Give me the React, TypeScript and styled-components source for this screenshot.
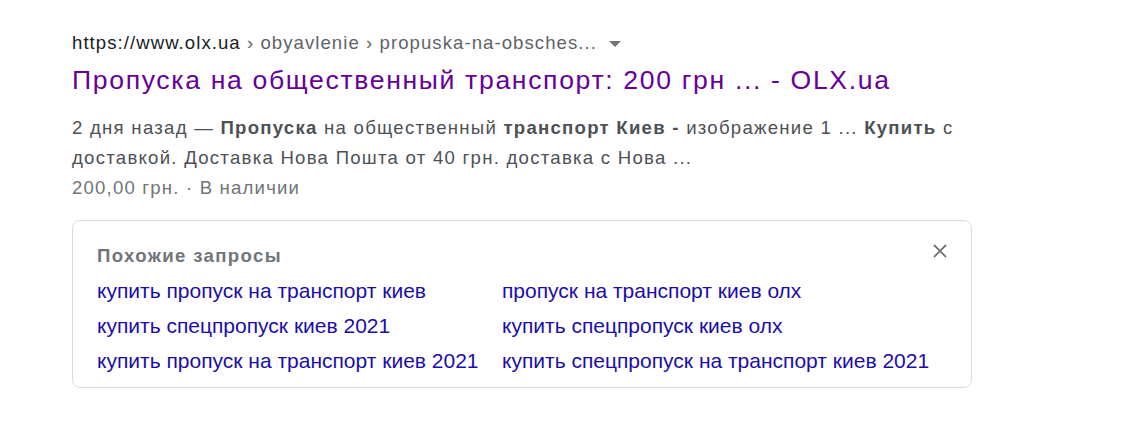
import React from 'react'
import styled, { createGlobalStyle } from 'styled-components'

const GlobalStyle = createGlobalStyle`
   body {
      margin: 0;
      background: #fff;
      font-family: "Liberation Sans", Arial, sans-serif;
   }
`

const Page = styled.div`
   padding: 28px 0 40px 72px;
   width: 930px;
`

const Crumbs = styled.div`
   display: flex;
   align-items: center;
   font-size: 18.6px;
   letter-spacing: 1.05px;
   line-height: 30px;
   color: #5f6368;
   white-space: nowrap;
`

const Host = styled.span`
   color: #202124;
`

const Caret = styled.span`
   display: inline-block;
   margin-left: 12px;
   margin-top: 1px;
   width: 0;
   height: 0;
   border-left: 6px solid transparent;
   border-right: 6px solid transparent;
   border-top: 6px solid #70757a;
`

const Title = styled.a`
   display: block;
   margin-top: 4px;
   font-size: 26.6px;
   letter-spacing: 1.65px;
   line-height: 36px;
   color: #660099;
   text-decoration: none;
`

const Snippet = styled.div`
   margin-top: 15px;
   font-size: 18.6px;
   letter-spacing: 1.25px;
   line-height: 29.5px;
   color: #4d5156;
`

const Meta = styled.div`
   margin-top: 1px;
   font-size: 18.6px;
   letter-spacing: 1.18px;
   line-height: 30px;
   color: #70757a;
`

const Related = styled.div`
   position: relative;
   box-sizing: border-box;
   width: 900px;
   margin-top: 17px;
   border: 1px solid #dadce0;
   border-radius: 8px;
   padding: 20px 24px 11px;
`

const RelatedHead = styled.div`
   font-size: 18.6px;
   font-weight: bold;
   letter-spacing: 1.35px;
   line-height: 30px;
   color: #70757a;
`

const Close = styled.button`
   position: absolute;
   top: 21px;
   right: 22px;
   width: 18px;
   height: 18px;
   padding: 0;
   border: 0;
   background: none;
   display: flex;
   align-items: center;
   justify-content: center;
`

const Grid = styled.div`
   display: grid;
   grid-template-columns: 405px 1fr;
   row-gap: 5px;
   margin-top: 5px;
`

const Query = styled.a`
   font-size: 21px;
   line-height: 30px;
   color: #1a0dab;
   text-decoration: none;
   white-space: nowrap;
`

const queries = [
   'купить пропуск на транспорт киев',
   'пропуск на транспорт киев олх',
   'купить спецпропуск киев 2021',
   'купить спецпропуск киев олх',
   'купить пропуск на транспорт киев 2021',
   'купить спецпропуск на транспорт киев 2021',
]

export default function App() {
   return (
      <>
         <GlobalStyle />
         <Page>
            <Crumbs>
               <Host>https://www.olx.ua</Host>
               &nbsp;› obyavlenie › propuska-na-obsches...
               <Caret />
            </Crumbs>
            <Title href="#">Пропуска на общественный транспорт: 200 грн ... - OLX.ua</Title>
            <Snippet>
               2 дня назад — <b>Пропуска</b> на общественный <b>транспорт Киев -</b> изображение 1 ... <b>Купить</b> с
               доставкой. Доставка Нова Пошта от 40 грн. доставка с Нова ...
            </Snippet>
            <Meta>200,00 грн. · В наличии</Meta>
            <Related>
               <RelatedHead>Похожие запросы</RelatedHead>
               <Close aria-label="Закрыть">
                  <svg width="14" height="14" viewBox="0 0 14 14">
                     <path d="M1 1L13 13M13 1L1 13" stroke="#70757a" strokeWidth="1.8" />
                  </svg>
               </Close>
               <Grid>
                  {queries.map(q => (
                     <Query key={q} href="#">{q}</Query>
                  ))}
               </Grid>
            </Related>
         </Page>
      </>
   )
}
